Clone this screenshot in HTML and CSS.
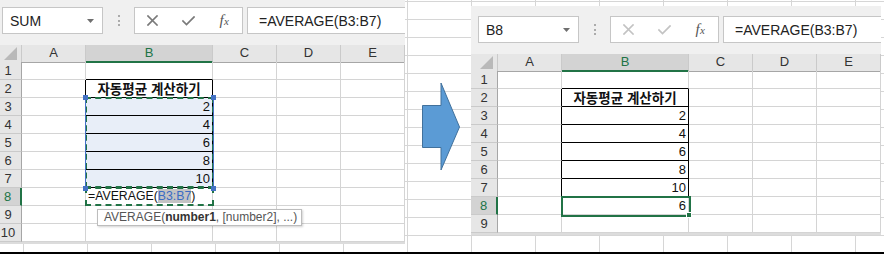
FILE: index.html
```html
<!DOCTYPE html>
<html lang="ko">
<head>
<meta charset="utf-8">
<title>AVERAGE</title>
<link rel="stylesheet" href="styles.css">
</head>
<body>
<div class="page">
  <div class="shot shot-left">
    <div class="xl">
      <div class="fbar">
        <div class="namebox"><span>SUM</span><svg class="dd" width="7" height="4" viewBox="0 0 7 4"><path d="M0 0H7L3.5 4Z"/></svg></div>
        <div class="dots"><i></i><i></i><i></i></div>
        <div class="btns">
          <div class="btn"><svg width="11" height="11" viewBox="0 0 11 11" class="ic on"><path d="M1 1L10 10M10 1L1 10"/></svg></div>
          <div class="btn"><svg width="13" height="10" viewBox="0 0 13 10" class="ic on"><path d="M1 5L4.5 8.5L12 1"/></svg></div>
          <div class="btn"><span class="fx"><i>f</i><i class="sx">x</i></span></div>
        </div>
        <div class="finput">=AVERAGE(B3:B7)</div>
      </div>
      <div class="hrow">
        <div class="hc corner"><svg width="14" height="13" viewBox="0 0 14 13"><path d="M13 0V13H0Z"/></svg></div>
        <div class="hc">A</div><div class="hc sel">B</div><div class="hc">C</div><div class="hc">D</div><div class="hc">E</div>
      </div>
      <div class="row"><div class="c rh">1</div><div class="c"></div><div class="c bk-b"></div><div class="c"></div><div class="c"></div><div class="c"></div></div>
      <div class="row"><div class="c rh">2</div><div class="c bk-r"></div><div class="c bk-r bk-b kr">자동평균 계산하기</div><div class="c"></div><div class="c"></div><div class="c"></div></div>
      <div class="row"><div class="c rh">3</div><div class="c bk-r"></div><div class="c bk-r bk-b num fill">2<div class="ants r5"></div><div class="refbox"><i class="h tl"></i><i class="h tr"></i><i class="h bl"></i><i class="h br"></i></div></div><div class="c"></div><div class="c"></div><div class="c"></div></div>
      <div class="row"><div class="c rh">4</div><div class="c bk-r"></div><div class="c bk-r bk-b num fill">4</div><div class="c"></div><div class="c"></div><div class="c"></div></div>
      <div class="row"><div class="c rh">5</div><div class="c bk-r"></div><div class="c bk-r bk-b num fill">6</div><div class="c"></div><div class="c"></div><div class="c"></div></div>
      <div class="row"><div class="c rh">6</div><div class="c bk-r"></div><div class="c bk-r bk-b num fill">8</div><div class="c"></div><div class="c"></div><div class="c"></div></div>
      <div class="row"><div class="c rh">7</div><div class="c bk-r"></div><div class="c bk-r bk-b num fill">10</div><div class="c"></div><div class="c"></div><div class="c"></div></div>
      <div class="row"><div class="c rh sel">8</div><div class="c"></div><div class="c edit">=AVERAGE(<span class="ref">B3:B7</span>)<div class="ants r1"></div></div><div class="c"></div><div class="c"></div><div class="c"></div></div>
      <div class="row"><div class="c rh">9</div><div class="c"></div><div class="c"><div class="tip">AVERAGE(<b>number1</b>, [number2], ...)</div></div><div class="c"></div><div class="c"></div><div class="c"></div></div>
      <div class="row"><div class="c rh">10</div><div class="c"></div><div class="c"></div><div class="c"></div><div class="c"></div><div class="c"></div></div>
      <div class="foot"></div>
    </div>
  </div>

  <div class="arrow">
    <svg width="38" height="89" viewBox="0 0 38 89"><path d="M0.5 23.5H19V1L37.5 45L19 88V65.5H0.5Z"/></svg>
  </div>

  <div class="shot shot-right">
    <div class="xl">
      <div class="fbar">
        <div class="namebox"><span>B8</span><svg class="dd" width="7" height="4" viewBox="0 0 7 4"><path d="M0 0H7L3.5 4Z"/></svg></div>
        <div class="dots"><i></i><i></i><i></i></div>
        <div class="btns">
          <div class="btn"><svg width="11" height="11" viewBox="0 0 11 11" class="ic off"><path d="M1 1L10 10M10 1L1 10"/></svg></div>
          <div class="btn"><svg width="13" height="10" viewBox="0 0 13 10" class="ic off"><path d="M1 5L4.5 8.5L12 1"/></svg></div>
          <div class="btn"><span class="fx"><i>f</i><i class="sx">x</i></span></div>
        </div>
        <div class="finput">=AVERAGE(B3:B7)</div>
      </div>
      <div class="hrow">
        <div class="hc corner"><svg width="14" height="13" viewBox="0 0 14 13"><path d="M13 0V13H0Z"/></svg></div>
        <div class="hc">A</div><div class="hc sel">B</div><div class="hc">C</div><div class="hc">D</div><div class="hc">E</div>
      </div>
      <div class="row"><div class="c rh">1</div><div class="c"></div><div class="c bk-b"></div><div class="c"></div><div class="c"></div><div class="c"></div></div>
      <div class="row"><div class="c rh">2</div><div class="c bk-r"></div><div class="c bk-r bk-b kr">자동평균 계산하기</div><div class="c"></div><div class="c"></div><div class="c"></div></div>
      <div class="row"><div class="c rh">3</div><div class="c bk-r"></div><div class="c bk-r bk-b num">2</div><div class="c"></div><div class="c"></div><div class="c"></div></div>
      <div class="row"><div class="c rh">4</div><div class="c bk-r"></div><div class="c bk-r bk-b num">4</div><div class="c"></div><div class="c"></div><div class="c"></div></div>
      <div class="row"><div class="c rh">5</div><div class="c bk-r"></div><div class="c bk-r bk-b num">6</div><div class="c"></div><div class="c"></div><div class="c"></div></div>
      <div class="row"><div class="c rh">6</div><div class="c bk-r"></div><div class="c bk-r bk-b num">8</div><div class="c"></div><div class="c"></div><div class="c"></div></div>
      <div class="row"><div class="c rh">7</div><div class="c bk-r"></div><div class="c bk-r bk-b num">10</div><div class="c"></div><div class="c"></div><div class="c"></div></div>
      <div class="row"><div class="c rh sel">8</div><div class="c"></div><div class="c num">6<div class="active"><i class="handle"></i></div></div><div class="c"></div><div class="c"></div><div class="c"></div></div>
      <div class="row"><div class="c rh">9</div><div class="c"></div><div class="c"></div><div class="c"></div><div class="c"></div><div class="c"></div></div>
      <div class="foot"></div>
    </div>
  </div>
</div>
</body>
</html>
```
FILE: styles.css
```css
* { box-sizing: border-box; }
html, body { margin: 0; padding: 0; }
body {
  width: 884px;
  height: 254px;
  overflow: hidden;
  background: #fff;
  font-family: "Liberation Sans", Arial, sans-serif;
  color: #222;
}
.page {
  height: 254px;
  border-bottom: 2px solid #000;
  display: flex;
  align-items: flex-start;
  background-color: #fff;
  background-image:
    linear-gradient(to right, #d6d6d6 1px, transparent 1px),
    linear-gradient(to bottom, #d6d6d6 1px, transparent 1px);
  background-size: 64px 18px;
  background-position: 23px 1px;
}
.shot { flex: none; overflow: hidden; }
.shot-left { width: 406px; height: 244px; }
.shot-left .xl { margin: -3px 0 0 -5px; }
.shot-right { width: 410px; height: 229px; margin: 6px 0 0 11px; }

.arrow { flex: none; width: 38px; height: 89px; margin: 82px 0 0 16px; }
.arrow svg { display: block; }
.arrow path { fill: #5b9bd5; stroke: #41719c; stroke-width: 1; }

.xl { width: 410px; background: #fff; }

/* formula bar */
.fbar {
  height: 48px;
  background: #f0f0f0;
  display: flex;
  align-items: flex-start;
  padding: 10px 0 0 7px;
}
.namebox {
  flex: none;
  width: 101px;
  height: 27px;
  background: #fff;
  border: 1px solid #c6c6c6;
  display: flex;
  align-items: center;
  justify-content: space-between;
  padding: 0 8px 0 7px;
  font-size: 14px;
  color: #222;
}
.dd path { fill: #6f6f6f; }
.dots {
  flex: none;
  width: 31px;
  height: 27px;
  display: flex;
  flex-direction: column;
  align-items: center;
  justify-content: center;
  gap: 2.5px;
}
.dots i { display: block; width: 2px; height: 2px; background: #ababab; }
.btns {
  flex: none;
  width: 109px;
  height: 27px;
  background: #fff;
  border: 1px solid #c6c6c6;
  display: flex;
}
.btn { width: 36px; display: flex; align-items: center; justify-content: center; }
.ic path { fill: none; stroke-width: 1.7; stroke-linecap: square; }
.ic.on path { stroke: #7a7a7a; }
.ic.off path { stroke: #c3c3c3; }
.fx {
  font-family: "Liberation Serif", serif;
  font-style: italic;
  color: #555;
  font-size: 15px;
  line-height: 1;
}
.fx i { font-style: italic; }
.fx .sx { font-size: 11px; margin-left: 0.5px; }
.finput {
  flex: 1;
  margin-left: 4px;
  height: 27px;
  background: #fff;
  border: 1px solid #c6c6c6;
  border-right: 0;
  padding-left: 11px;
  font-size: 14px;
  display: flex;
  align-items: center;
  color: #222;
  white-space: nowrap;
}

/* headers */
.hrow, .row {
  display: grid;
  grid-template-columns: 27px 64px 127px 64px 64px 64px;
}
.hrow { height: 17px; background: #e6e6e6; }
.hc {
  border-right: 1px solid #cacaca;
  border-bottom: 1px solid #a6a6a6;
  font-size: 13px;
  line-height: 16px;
  text-align: center;
  color: #333;
}
.hc.sel { background: #d3d3d3; border-bottom: 2px solid #217346; color: #217346; }
.corner { display: flex; align-items: flex-end; justify-content: flex-end; padding: 0 3px 2px 0; }
.corner svg { display: block; }
.corner path { fill: #b9b9b9; }

/* cells */
.row { height: 18px; }
.c {
  position: relative;
  border-right: 1px solid #d4d4d4;
  border-bottom: 1px solid #d4d4d4;
  font-size: 13px;
  line-height: 17px;
  padding: 0 2px;
  white-space: nowrap;
}
.rh {
  background: #e6e6e6;
  border-right: 1px solid #a6a6a6;
  border-bottom-color: #cacaca;
  text-align: center;
  color: #333;
  padding: 0;
}
.rh.sel { background: #d3d3d3; color: #217346; border-right: 2px solid #217346; }
.bk-r { border-right-color: #000; }
.bk-b { border-bottom-color: #000; }
.num { text-align: right; color: #111; }
.kr {
  font-family: "Noto Sans CJK KR", sans-serif;
  font-weight: 700;
  font-size: 13.5px;
  line-height: 17px;
  text-align: center;
  color: #111;
}
.fill { background: #e8eef8; }
.edit { font-size: 12.3px; color: #111; }
.ref { color: #3a6bc4; background: #c3c3c3; }

/* overlays */
.ants {
  position: absolute;
  left: -1px;
  top: -1px;
  width: 129px;
  border: 2px dashed #217346;
  z-index: 2;
  pointer-events: none;
}
.ants.r5 { height: 91px; }
.ants.r1 { height: 19px; }
.refbox {
  position: absolute;
  left: -1px;
  top: -1px;
  width: 129px;
  height: 91px;
  border-left: 1px solid #4472c4;
  border-right: 1px solid #4472c4;
  z-index: 3;
}
.h { position: absolute; width: 5px; height: 5px; background: #4472c4; }
.h.tl { left: -3px; top: -2px; }
.h.tr { right: -3px; top: -2px; }
.h.bl { left: -3px; bottom: -3px; }
.h.br { right: -3px; bottom: -3px; }
.active {
  position: absolute;
  left: -1px;
  top: -1px;
  width: 130px;
  height: 21px;
  border: 2px solid #217346;
  z-index: 2;
}
.handle {
  position: absolute;
  right: -3px;
  bottom: -3px;
  width: 6px;
  height: 6px;
  background: #217346;
  border: 1px solid #fff;
}
.tip {
  position: absolute;
  left: 11px;
  top: 3px;
  width: 205px;
  height: 17px;
  background: #fff;
  border: 1px solid #bdbdbd;
  box-shadow: 1px 1px 2px rgba(0, 0, 0, 0.18);
  font-size: 12px;
  line-height: 15px;
  color: #555;
  padding-left: 6px;
  z-index: 5;
}
.tip b { color: #333; }
.foot { height: 2px; background: #dcdcdc; }
```
